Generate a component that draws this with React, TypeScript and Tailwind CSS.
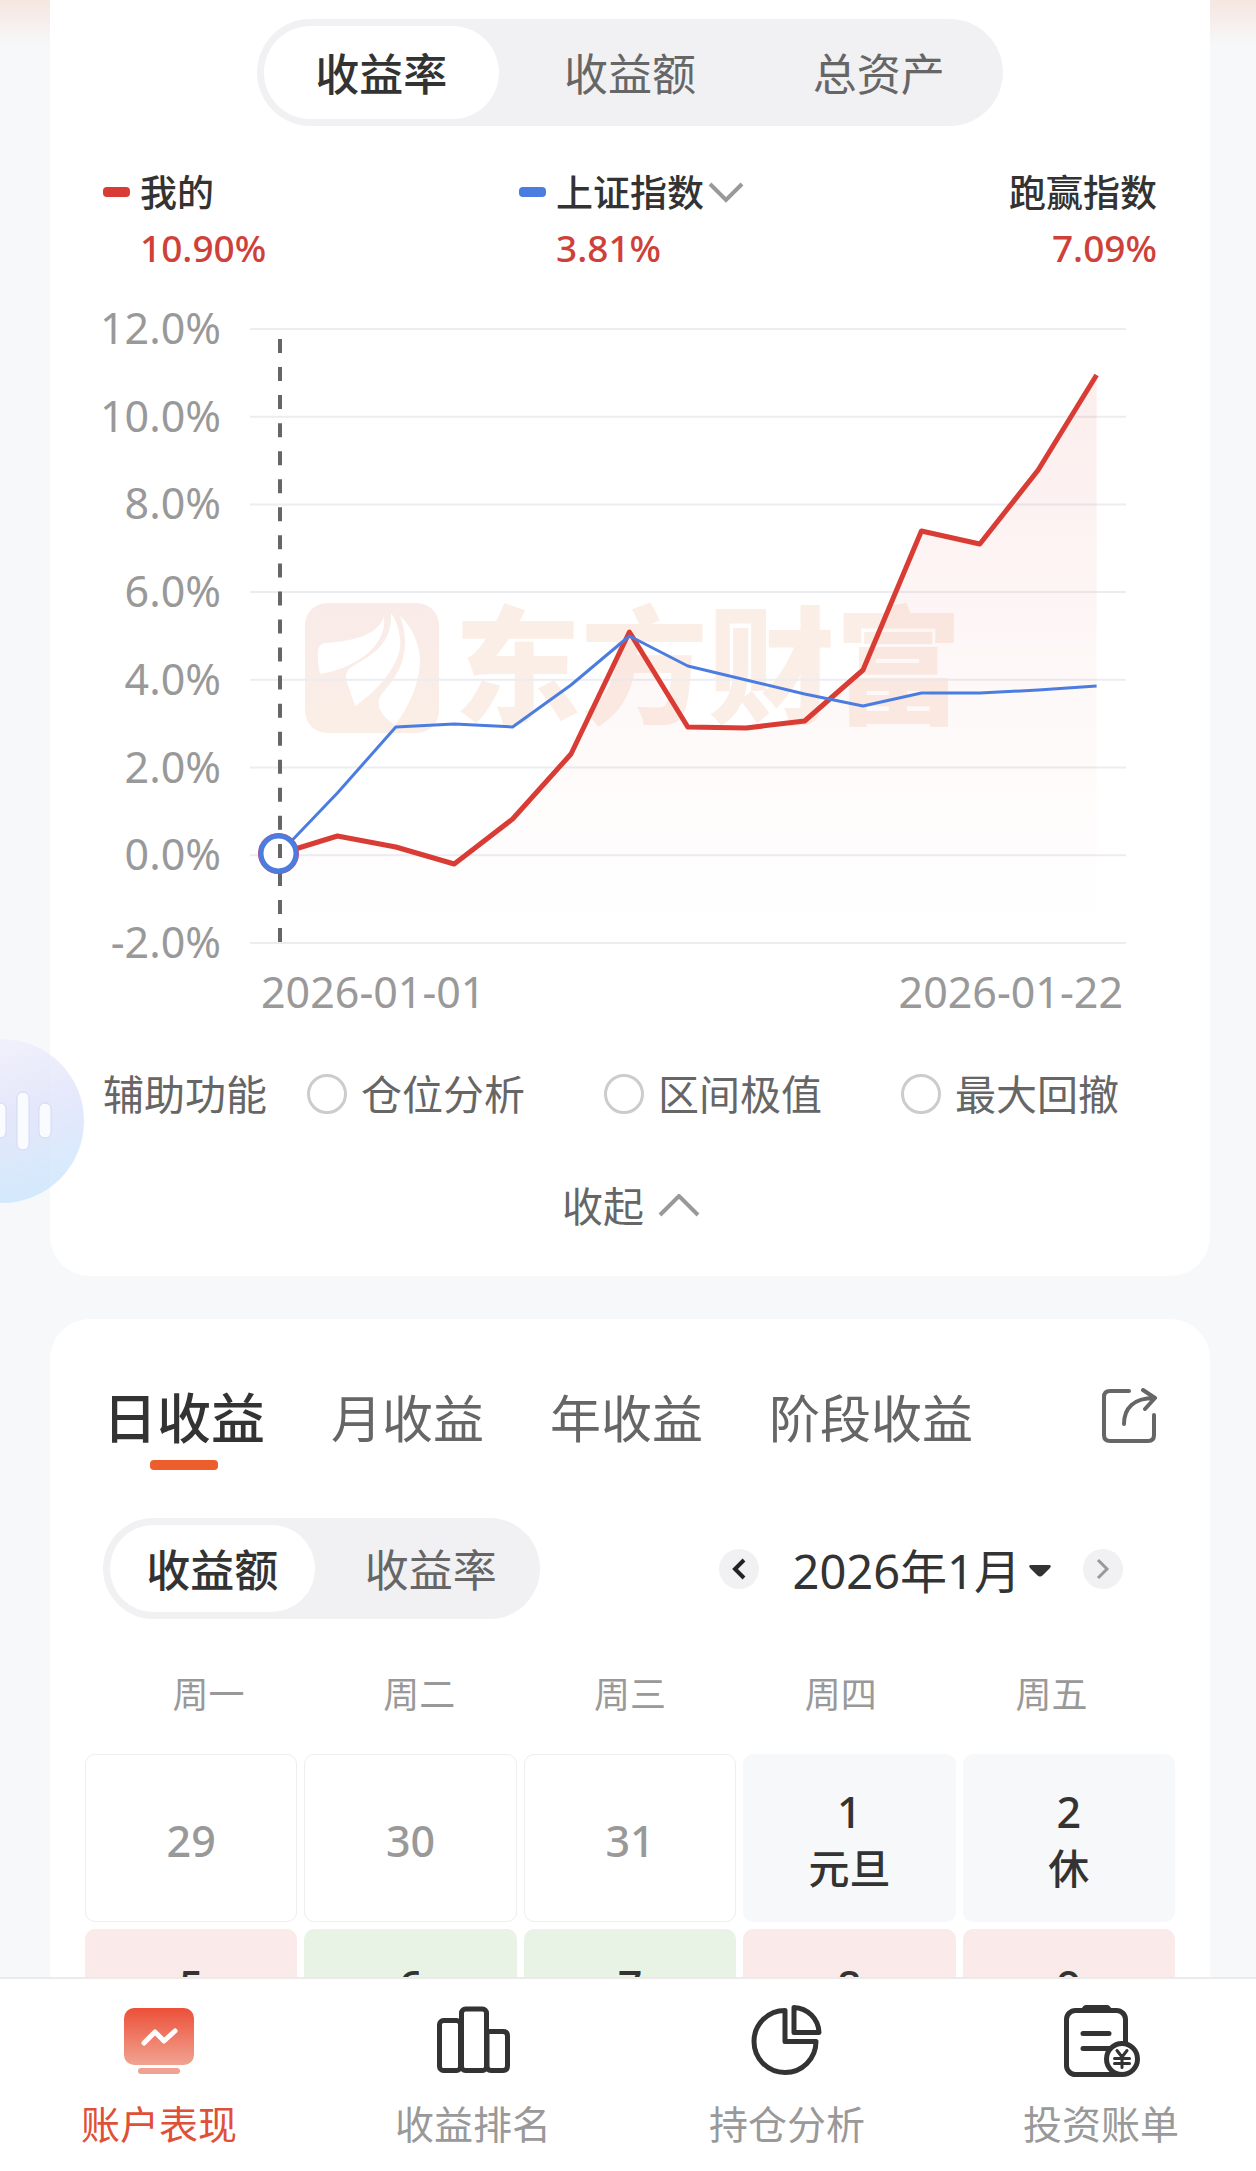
import { useState } from "react";

const mine = [854, 836, 847, 864, 819, 754, 632, 727, 728, 721, 670, 531, 544, 470, 375];
const index = [854, 793, 727, 724, 727, 685, 636, 666, 680, 694, 706, 693, 693, 690, 686];
const axis = ["12.0%", "10.0%", "8.0%", "6.0%", "4.0%", "2.0%", "0.0%", "-2.0%"];

const toPoints = (ys: number[]) =>
  ys.map((y, i) => `${(176 + i * 58.4).toFixed(1)},${y - 300}`).join(" ");

const weekdays = ["周一", "周二", "周三", "周四", "周五"];

interface Day {
  day: number;
  note?: string;
  kind: "other" | "rest" | "up" | "down";
}

const days: Day[] = [
  { day: 29, kind: "other" },
  { day: 30, kind: "other" },
  { day: 31, kind: "other" },
  { day: 1, note: "元旦", kind: "rest" },
  { day: 2, note: "休", kind: "rest" },
  { day: 5, kind: "up" },
  { day: 6, kind: "down" },
  { day: 7, kind: "down" },
  { day: 8, kind: "up" },
  { day: 9, kind: "up" },
];

const dayStyles = {
  other: "justify-center border border-[#eeeeee] pt-1 text-[#999999]",
  rest: "justify-center bg-[#f7f8fa] pt-1 text-[#333333]",
  up: "bg-[#faeaea] pt-7 text-[#333333]",
  down: "bg-[#e8f3e6] pt-7 text-[#333333]",
};

interface SegmentedProps {
  items: string[];
  className: string;
  itemClassName: string;
}

const Segmented = (props: SegmentedProps) => {
  const [active, setActive] = useState(0);
  return (
    <div className={`flex rounded-full bg-[#f1f1f3] ${props.className}`}>
      {props.items.map((item, i) => (
        <div key={item} className="flex-1 p-[7px]">
          <button
            type="button"
            onClick={() => setActive(i)}
            className={`block w-full rounded-full pt-1 text-[44px] ${props.itemClassName} ${
              i === active ? "bg-white font-medium text-[#333333]" : "text-[#666666]"
            }`}
          >
            {item}
          </button>
        </div>
      ))}
    </div>
  );
};

const Chart = () => (
  <svg viewBox="-8 0 1062 724" className="mt-[26px] -ml-2 block h-auto w-[calc(100%+8px)] overflow-visible">
    <defs>
      <linearGradient id="area" x1="0" y1="75" x2="0" y2="642" gradientUnits="userSpaceOnUse">
        <stop offset="0" stopColor="#d93c34" stopOpacity="0.09" />
        <stop offset="0.6" stopColor="#d93c34" stopOpacity="0.03" />
        <stop offset="1" stopColor="#d93c34" stopOpacity="0" />
      </linearGradient>
      <linearGradient id="mark" x1="0" y1="0" x2="0" y2="1">
        <stop offset="0" stopColor="#f9ebe9" />
        <stop offset="1" stopColor="#fbeee6" />
      </linearGradient>
    </defs>

    <rect x="202" y="303" width="134" height="130" rx="22" fill="url(#mark)" />
    <g fill="#ffffff">
      <path d="M281 316C276 336 245 342 222 343Q216 344 215 350Q214 360 217 374C245 370 285 350 281 316Z" />
      <path d="M288 313C290 350 260 358 246 369Q241 374 244 382L252 406C268 396 301 365 297 338Q295 322 288 313Z" />
      <path d="M297 316C312 330 320 352 316 372C312 395 302 412 292 425C284 420 270 408 278 395C286 385 303 368 302 340Q301 326 297 316Z" />
    </g>
    <text x="351" y="414" fontSize="127" fontWeight="900" fill="#fbeee7">
      东方财富
    </text>

    {axis.map((label, i) => (
      <g key={label}>
        <line x1="147" x2="1023" y1={29 + i * 87.7} y2={29 + i * 87.7} stroke="#ecedf1" strokeWidth="2" />
        <text x="118" y={44 + i * 87.7} fontSize="43" textAnchor="end" fill="#999999">
          {label}
        </text>
      </g>
    ))}

    <polygon points={`176,642 ${toPoints(mine)} 993.6,642`} fill="url(#area)" />
    <polyline points={toPoints(mine)} fill="none" stroke="#d93c34" strokeWidth="5" strokeLinejoin="round" />
    <polyline points={toPoints(index)} fill="none" stroke="#4b7de0" strokeWidth="3" strokeLinejoin="round" />

    <circle cx="175.500" cy="553.500" r="18" fill="#ffffff" />
    <line x1="177" x2="177" y1="39" y2="642" stroke="#666666" strokeWidth="4" strokeDasharray="14 14.050" />
    <circle cx="175.500" cy="553.500" r="18" fill="none" stroke="#c2457a" strokeWidth="5" />
    <circle cx="175.500" cy="553.500" r="17.500" fill="none" stroke="#4b7de0" strokeWidth="5" />

    <text x="158" y="708" fontSize="43" fill="#999999">
      2026-01-01
    </text>
    <text x="1020" y="708" fontSize="43" textAnchor="end" fill="#999999">
      2026-01-22
    </text>
  </svg>
);

const Legend = () => (
  <div className="mt-[41px] grid grid-cols-[416px_1fr_auto] text-[37px] leading-[52px] font-medium text-[#333333]">
    <div className="flex gap-[10px]">
      <span className="mt-5 h-[10px] w-[27px] rounded-[4px] bg-[#d93c34]" />
      <div>
        <div>我的</div>
        <div className="mt-[3px] text-[#cf4039]">10.90%</div>
      </div>
    </div>
    <div className="flex gap-[10px]">
      <span className="mt-5 h-[10px] w-[27px] rounded-[4px] bg-[#4b7de0]" />
      <div>
        <button type="button" className="flex items-center gap-1">
          上证指数
          <svg width="36" height="22" viewBox="0 0 36 22" fill="none" stroke="#999999" strokeWidth="4">
            <path d="M2 2L18 18L34 2" />
          </svg>
        </button>
        <div className="mt-[3px] text-[#cf4039]">3.81%</div>
      </div>
    </div>
    <div className="text-right">
      <div>跑赢指数</div>
      <div className="mt-[3px] text-[#cf4039]">7.09%</div>
    </div>
  </div>
);

const Tools = () => (
  <div className="mt-10 flex items-center text-[41px] leading-[60px] text-[#666666]">
    <span className="mr-10">辅助功能</span>
    <div className="flex gap-[79px]">
      {["仓位分析", "区间极值", "最大回撤"].map((name) => (
        <label key={name} className="flex items-center gap-[14px]">
          <input
            type="checkbox"
            className="size-10 appearance-none rounded-full border-[3px] border-[#cccccc] checked:bg-[#cccccc]"
          />
          {name}
        </label>
      ))}
    </div>
  </div>
);

const AccountIcon = () => (
  <svg width="80" height="76" viewBox="0 0 80 76">
    <defs>
      <linearGradient id="screen" x1="0" y1="0" x2="0" y2="1">
        <stop offset="0" stopColor="#ec5038" />
        <stop offset="1" stopColor="#f1a392" />
      </linearGradient>
    </defs>
    <rect x="5" y="6" width="70" height="57" rx="10" fill="url(#screen)" />
    <rect x="19" y="66" width="42" height="6" rx="3" fill="#f0a191" />
    <path d="M25 41L36 30L45 39L56 29" fill="none" stroke="#fff" strokeWidth="5" strokeLinecap="round" strokeLinejoin="round" />
  </svg>
);

const RankIcon = () => (
  <svg width="80" height="76" viewBox="0 0 80 76" fill="none" stroke="#333333" strokeWidth="5">
    <rect x="6.500" y="18.500" width="21" height="50" rx="4" />
    <rect x="28.500" y="7" width="25" height="61.500" rx="4" />
    <path d="M54 29.500H70Q74.500 29.500 74.500 34V64Q74.500 68.500 70 68.500H58Q54 68.500 54 64Z" />
  </svg>
);

const PieIcon = () => (
  <svg width="80" height="76" viewBox="0 0 80 76" fill="none" stroke="#333333" strokeWidth="5" strokeLinejoin="round">
    <path d="M38 8.500A31 31 0 1 0 69 39.500H38Z" />
    <path d="M47 5.500A26 26 0 0 1 72 30.500H47Z" />
  </svg>
);

const BillIcon = () => (
  <svg width="80" height="76" viewBox="0 0 80 76" fill="none" stroke="#333333" strokeWidth="5" strokeLinecap="round">
    <rect x="5.500" y="8.500" width="59" height="64" rx="9" />
    <path d="M25 3H46Q49 3 51 8H20Q22 3 25 3Z" fill="#333333" stroke="none" />
    <path d="M22 31.500H48M22 46.500H48" />
    <circle cx="61" cy="57" r="15.500" fill="#fff" />
    <path d="M56 48.500L61 55L66 48.500M61 55V65.500M53.500 56.500H68.500M53.500 61.500H68.500" strokeWidth="3" />
  </svg>
);

const navItems = [
  { label: "账户表现", icon: AccountIcon },
  { label: "收益排名", icon: RankIcon },
  { label: "持仓分析", icon: PieIcon },
  { label: "投资账单", icon: BillIcon },
];

const VoiceBubble = () => (
  <button
    type="button"
    aria-label="语音助手"
    className="absolute top-[1039px] -left-[80px] size-[164px] rounded-full bg-linear-160 from-[#f6f4fc]/80 via-[#dfe3fa]/80 to-[#c4e6fd]/80"
  >
    <svg viewBox="0 0 164 164" className="size-full" fill="#fafbff" stroke="#d3d8f5" strokeWidth="1">
      <rect x="74" y="64" width="12" height="35" rx="6" />
      <rect x="97" y="53" width="12" height="58" rx="6" />
      <rect x="119" y="64" width="12" height="35" rx="6" />
    </svg>
  </button>
);

const App = () => {
  const [tab, setTab] = useState("日收益");

  return (
    <div className="relative flex h-screen flex-col overflow-hidden bg-[#f7f8fa] bg-[linear-gradient(#f5e6e0,#f7f8fa_46px)] font-['Noto_Sans','Noto_Sans_CJK_SC',sans-serif]">
      <main className="min-h-0 flex-1 overflow-y-auto pr-[46px] pl-[50px] [scrollbar-width:none]">
        <section className="rounded-b-[40px] bg-white px-[53px] pt-[19px] pb-10">
          <Segmented
            items={["收益率", "收益额", "总资产"]}
            className="mx-auto w-[746px]"
            itemClassName="leading-[89px]"
          />
          <Legend />
          <Chart />
          <Tools />
          <button
            type="button"
            className="mx-auto mt-[52px] flex items-center gap-[14px] pl-[2px] text-[41px] leading-[60px] text-[#666666]"
          >
            收起
            <svg width="42" height="24" viewBox="0 0 42 24" fill="none" stroke="#999999" strokeWidth="4">
              <path d="M2 21L21 2L40 21" />
            </svg>
          </button>
        </section>

        <section className="mt-[43px] rounded-t-[40px] bg-white px-[53px] pt-16 pb-10">
          <div className="flex items-start gap-[66px] leading-[70px]">
            {["日收益", "月收益", "年收益", "阶段收益"].map((name) => (
              <button
                key={name}
                type="button"
                onClick={() => setTab(name)}
                className={
                  name === tab
                    ? "flex flex-col items-center text-[54px] font-medium text-[#333333]"
                    : "text-[51px] text-[#666666]"
                }
              >
                {name}
                {name === tab && <span className="mt-[7px] h-[10px] w-[68px] rounded-[4px] bg-[#ec5f2c]" />}
              </button>
            ))}
            <button type="button" aria-label="分享" className="mt-1 ml-auto">
              <svg
                width="60"
                height="60"
                viewBox="-3 1 60 60"
                fill="none"
                stroke="#666666"
                strokeWidth="4"
                strokeLinecap="round"
                strokeLinejoin="round"
              >
                <path d="M29 5H10Q4 5 4 11V49Q4 55 10 55H48Q54 55 54 49V29" />
                <path d="M24 38C24 22 34 12 54 12M43 4L55 12L45 23" />
              </svg>
            </button>
          </div>

          <div className="mt-12 flex items-center justify-between">
            <Segmented items={["收益额", "收益率"]} className="w-[437px]" itemClassName="leading-[83px]" />
            <div className="flex items-center pr-[34px]">
              <button type="button" aria-label="上个月" className="flex size-10 items-center justify-center rounded-full bg-[#f1f1f3]">
                <svg width="14" height="22" viewBox="0 0 14 22" fill="none" stroke="#222222" strokeWidth="4">
                  <path d="M12 2L3 11L12 20" />
                </svg>
              </button>
              <button type="button" className="mr-8 ml-[34px] flex items-center gap-2 pt-1 text-[47px] leading-[60px] text-[#333333]">
                2026年1月
                <svg width="22" height="12" viewBox="0 0 22 12" fill="#333333">
                  <path d="M2 0H20Q23 0 21 3L14 10Q11 13 8 10L1 3Q-1 0 2 0Z" />
                </svg>
              </button>
              <button type="button" aria-label="下个月" className="flex size-10 items-center justify-center rounded-full bg-[#f1f1f3]">
                <svg width="14" height="22" viewBox="0 0 14 22" fill="none" stroke="#999999" strokeWidth="3">
                  <path d="M2 2L11 11L2 20" />
                </svg>
              </button>
            </div>
          </div>

          <div className="mt-[50px] grid grid-cols-5 text-center text-[36px] leading-[52px] text-[#999999]">
            {weekdays.map((name) => (
              <div key={name}>{name}</div>
            ))}
          </div>

          <div className="-mx-[18px] mt-[33px] grid grid-cols-5 gap-[7px]">
            {days.map((d) => (
              <button
                key={d.day}
                type="button"
                className={`flex h-[168px] flex-col items-center rounded-[10px] text-[43px] leading-[57px] font-medium ${dayStyles[d.kind]}`}
              >
                {d.day}
                {d.note && <span className="text-[41px]">{d.note}</span>}
              </button>
            ))}
          </div>
        </section>
      </main>

      <nav className="grid grid-cols-4 gap-1 border-t-2 border-[#ebebeb] bg-white pt-[23px] pb-[17px] pl-1">
        {navItems.map(({ label, icon: Icon }, i) => (
          <a
            key={label}
            href="#"
            className={`flex flex-col items-center gap-4 text-[39px] leading-[60px] ${
              i === 0 ? "text-[#df5039]" : "text-[#999999]"
            }`}
          >
            <Icon />
            {label}
          </a>
        ))}
      </nav>

      <VoiceBubble />
    </div>
  );
};

export default App;
